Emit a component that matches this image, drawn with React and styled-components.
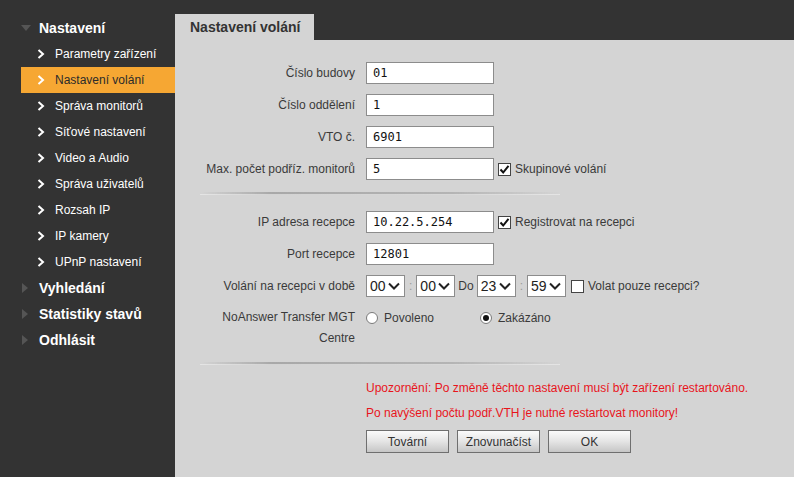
import React from 'react'
import styled, { createGlobalStyle } from 'styled-components'

const GlobalStyle = createGlobalStyle`
  html, body {
    margin: 0;
    padding: 0;
    background: #333333;
  }
  body {
    font-family: 'Liberation Sans', Arial, sans-serif;
    font-size: 12px;
  }
`

let Screen = styled.div`
  display: flex;
  width: 794px;
  height: 477px;
  background-color: #333333;
  overflow: hidden;
`
let Sidebar = styled.div`
  width: 175px;
  flex-shrink: 0;
  padding-top: 15px;
  box-sizing: border-box;
`
let GroupHeader = styled.div`
  height: 26px;
  display: flex;
  align-items: center;
  padding-left: 21px;
  color: #ffffff;
  font-weight: bold;
  font-size: 14px;
`
let Caret = styled.span`
  width: 18px;
  display: flex;
  align-items: center;
`
let NavItem = styled.div`
  height: 26px;
  display: flex;
  align-items: center;
  margin-left: 21px;
  padding-left: 16px;
  color: ${props => (props.active ? '#2b2b2b' : '#ffffff')};
  background-color: ${props => (props.active ? '#f6a733' : 'transparent')};
  font-size: 12px;
`
let Chevron = styled.span`
  width: 18px;
  display: flex;
  align-items: center;
`
let Main = styled.div`
  flex: 1;
  display: flex;
  flex-direction: column;
  padding-top: 14px;
`
let TabBar = styled.div`
  display: flex;
`
let Tab = styled.div`
  width: 139px;
  height: 26px;
  box-sizing: border-box;
  padding-left: 15px;
  display: flex;
  align-items: center;
  background-color: #d4d4d4;
  color: #333333;
  font-weight: bold;
  font-size: 14px;
`
let Panel = styled.div`
  flex: 1;
  background-color: #d4d4d4;
  padding: 17px 0 0 20px;
`
let Row = styled.div`
  display: flex;
  align-items: flex-start;
  padding: 5px 0;
  line-height: 22px;
  color: #3a3a3a;
`
let Label = styled.div`
  width: 160px;
  margin-right: 11px;
  text-align: right;
  line-height: ${props => (props.tall ? '21px' : '22px')};
`
let TextInput = styled.div`
  width: 128px;
  height: 22px;
  box-sizing: border-box;
  border: 1px solid #8c8c8c;
  background: #ffffff;
  padding-left: 6px;
  font-family: 'DejaVu Sans Mono', monospace;
  font-size: 12px;
  line-height: 20px;
  color: #111111;
`
let CheckWrap = styled.div`
  display: flex;
  align-items: center;
  height: 22px;
  margin-left: ${props => props.offset || 4}px;
  color: #3a3a3a;
`
let CheckBox = styled.span`
  width: 13px;
  height: 13px;
  box-sizing: border-box;
  border: 1px solid #444444;
  background: #ffffff;
  margin-right: 4px;
  display: flex;
  align-items: center;
  justify-content: center;
`
let Controls = styled.div`
  display: flex;
  align-items: center;
  height: 22px;
`
let Select = styled.div`
  width: 39px;
  height: 22px;
  box-sizing: border-box;
  border: 1px solid #8c8c8c;
  background: #ffffff;
  display: flex;
  align-items: center;
  justify-content: space-between;
  padding: 0 4px 0 3px;
  font-size: 14px;
  color: #222222;
`
let Sep = styled.span`
  color: ${props => (props.muted ? '#9a9a9a' : '#3a3a3a')};
  margin: 0 ${props => props.space || 4}px;
`
let RadioWrap = styled.div`
  display: flex;
  align-items: center;
  height: 22px;
  width: ${props => props.width || 'auto'};
`
let Radio = styled.span`
  width: 12px;
  height: 12px;
  box-sizing: border-box;
  border-radius: 50%;
  border: 1px solid #7a7a7a;
  background: #ffffff;
  margin-right: 6px;
  display: flex;
  align-items: center;
  justify-content: center;
  &::after {
    content: '';
    display: ${props => (props.checked ? 'block' : 'none')};
    width: 6px;
    height: 6px;
    border-radius: 50%;
    background: #111111;
  }
`
let Divider = styled.div`
  width: 360px;
  height: 2px;
  margin: ${props => props.margin};
  margin-left: 5px;
  background: linear-gradient(to right, rgba(160, 160, 160, 0), #a8a8a8 20%, #b4b4b4 70%, rgba(180, 180, 180, 0));
  border-bottom: 1px solid rgba(240, 240, 240, 0.6);
`
let Notes = styled.div`
  margin-left: 171px;
  color: #e8141c;
  line-height: 25px;
`
let Buttons = styled.div`
  display: flex;
  gap: 8px;
  margin-left: 171px;
  margin-top: 4px;
`
let Button = styled.div`
  width: 83px;
  height: 23px;
  box-sizing: border-box;
  border: 1px solid #6f6f6f;
  background: linear-gradient(to bottom, #fbfbfb, #e4e4e4 50%, #c6c6c6);
  display: flex;
  align-items: center;
  justify-content: center;
  color: #333333;
  font-size: 12px;
`

const DownTriangle = () => (
  <svg width="10" height="8" viewBox="0 0 10 8">
    <polygon points="0,1 10,1 5,7" fill="#555555" />
  </svg>
)
const RightTriangle = () => (
  <svg width="8" height="10" viewBox="0 0 8 10">
    <polygon points="1,0 7,5 1,10" fill="#555555" />
  </svg>
)
const ChevronIcon = () => (
  <svg width="8" height="10" viewBox="0 0 8 10">
    <polyline points="1.5,1 6,5 1.5,9" fill="none" stroke="#ffffff" strokeWidth="2" />
  </svg>
)
const CheckMark = () => (
  <svg width="11" height="11" viewBox="0 0 11 11">
    <polyline points="1.5,5.5 4.2,8.5 9.5,1.8" fill="none" stroke="#111" strokeWidth="2" />
  </svg>
)
const SelectArrow = () => (
  <svg width="12" height="8" viewBox="0 0 12 8">
    <polyline points="1,1.5 6,6.5 11,1.5" fill="none" stroke="#222" strokeWidth="2" />
  </svg>
)

const menu = [
  'Parametry zařízení',
  'Nastavení volání',
  'Správa monitorů',
  'Síťové nastavení',
  'Video a Audio',
  'Správa uživatelů',
  'Rozsah IP',
  'IP kamery',
  'UPnP nastavení'
]

const Check = ({ checked, label, offset }) => (
  <CheckWrap offset={offset}>
    <CheckBox>{checked && <CheckMark />}</CheckBox>
    {label}
  </CheckWrap>
)

const TimeSelect = ({ value }) => (
  <Select>
    <span>{value}</span>
    <SelectArrow />
  </Select>
)

const App = () => (
  <Screen>
    <GlobalStyle />
    <Sidebar>
      <GroupHeader>
        <Caret>
          <DownTriangle />
        </Caret>
        Nastavení
      </GroupHeader>
      {menu.map(item => (
        <NavItem key={item} active={item === 'Nastavení volání'}>
          <Chevron>
            <ChevronIcon />
          </Chevron>
          {item}
        </NavItem>
      ))}
      {['Vyhledání', 'Statistiky stavů', 'Odhlásit'].map(item => (
        <GroupHeader key={item}>
          <Caret>
            <RightTriangle />
          </Caret>
          {item}
        </GroupHeader>
      ))}
    </Sidebar>
    <Main>
      <TabBar>
        <Tab>Nastavení volání</Tab>
      </TabBar>
      <Panel>
        <Row>
          <Label>Číslo budovy</Label>
          <TextInput>01</TextInput>
        </Row>
        <Row>
          <Label>Číslo oddělení</Label>
          <TextInput>1</TextInput>
        </Row>
        <Row>
          <Label>VTO č.</Label>
          <TextInput>6901</TextInput>
        </Row>
        <Row>
          <Label>Max. počet podříz. monitorů</Label>
          <TextInput>5</TextInput>
          <Check checked label="Skupinové volání" />
        </Row>
        <Divider margin="7px 0 11px" />
        <Row>
          <Label>IP adresa recepce</Label>
          <TextInput>10.22.5.254</TextInput>
          <Check checked label="Registrovat na recepci" />
        </Row>
        <Row>
          <Label>Port recepce</Label>
          <TextInput>12801</TextInput>
        </Row>
        <Row>
          <Label>Volání na recepci v době</Label>
          <Controls>
            <TimeSelect value="00" />
            <Sep muted>:</Sep>
            <TimeSelect value="00" />
            <Sep space={3}>Do</Sep>
            <TimeSelect value="23" />
            <Sep muted>:</Sep>
            <TimeSelect value="59" />
          </Controls>
          <Check label="Volat pouze recepci?" offset={5} />
        </Row>
        <Row>
          <Label tall>NoAnswer Transfer MGT Centre</Label>
          <RadioWrap width="114px">
            <Radio />
            Povoleno
          </RadioWrap>
          <RadioWrap>
            <Radio checked />
            Zakázáno
          </RadioWrap>
        </Row>
        <Divider margin="8px 0 11px" />
        <Notes>
          <div>Upozornění: Po změně těchto nastavení musí být zařízení restartováno.</div>
          <div>Po navýšení počtu podř.VTH je nutné restartovat monitory!</div>
        </Notes>
        <Buttons>
          <Button>Tovární</Button>
          <Button>Znovunačíst</Button>
          <Button>OK</Button>
        </Buttons>
      </Panel>
    </Main>
  </Screen>
)

export default App
